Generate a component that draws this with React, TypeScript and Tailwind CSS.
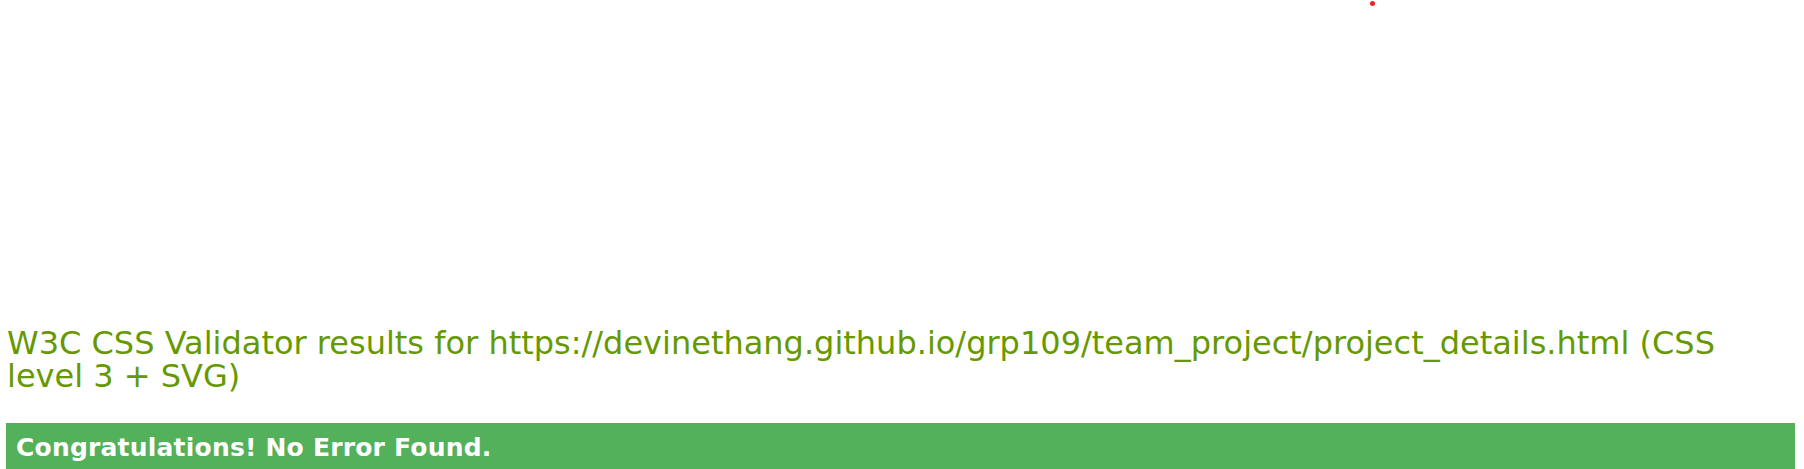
import React from 'react';

const App = () => {
    return (
        <div className="relative h-[469px] overflow-hidden bg-white pl-[6px] pr-[9px] font-['DejaVu_Sans',Verdana,sans-serif]">
            <span className="absolute left-[1370px] top-[1px] h-[5px] w-[5px] rounded-full bg-[#e8262a]" />
            <h2 className="pl-[1px] pt-[327px] text-[32px] font-normal leading-[33px] text-[#669900]">
                W3C CSS Validator results for https://devinethang.github.io/grp109/team_project/project_details.html (CSS level 3 + SVG)
            </h2>
            <div className="mt-[30px] h-[80px] bg-[#53b05b] pl-[10px] pt-[10px]">
                <h3 className="text-[25px] font-bold leading-[29px] tracking-[0.2px] text-white">
                    Congratulations! No Error Found.
                </h3>
            </div>
        </div>
    );
};

export default App;
